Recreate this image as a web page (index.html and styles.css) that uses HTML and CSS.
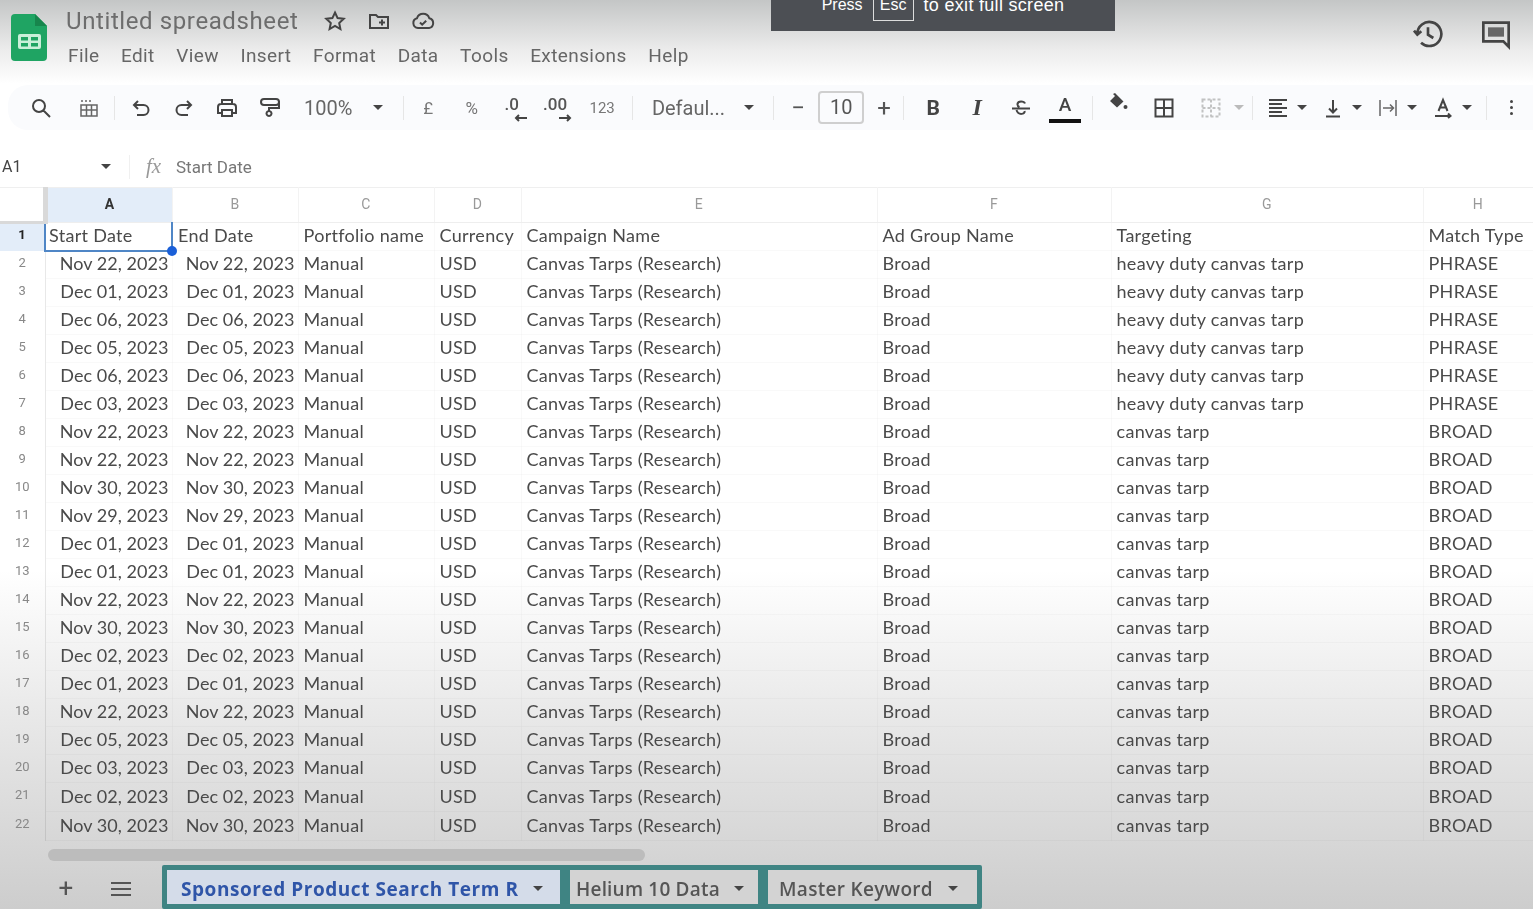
FILE: index.html
```html
<!DOCTYPE html>
<html lang="en">

<head>
    <meta charset="UTF-8">
    <meta name="viewport" content="width=device-width, initial-scale=1.0">
    <title>Untitled spreadsheet</title>
    <link rel="stylesheet" href="styles.css">
</head>

<body>
    <div class="app">

        <div class="fs-notice">
            <span>Press</span><span class="esc">Esc</span><span class="fs-rest">to exit full screen</span>
        </div>

        <header class="top">
            <svg class="logo" viewBox="0 0 36 47">
                <path d="M4 0H24L36 12V43a4 4 0 0 1-4 4H4a4 4 0 0 1-4-4V4a4 4 0 0 1 4-4z" fill="#1fa463" />
                <path d="M24 0V12H36z" fill="#17864d" />
                <rect x="7" y="20" width="23" height="15" rx="2" fill="#c9efd9" />
                <rect x="10" y="23" width="7" height="3.5" fill="#1fa463" />
                <rect x="20" y="23" width="7" height="3.5" fill="#1fa463" />
                <rect x="10" y="29" width="7" height="3.5" fill="#1fa463" />
                <rect x="20" y="29" width="7" height="3.5" fill="#1fa463" />
            </svg>
            <div class="doc">
                <div class="doc-title">
                    <span class="doc-name">Untitled spreadsheet</span>
                    <svg class="ico" viewBox="0 0 24 24"><path class="ln" d="M12 3.500l2.600 5.600 6.100.7-4.500 4.200 1.200 6L12 17l-5.400 3 1.200-6-4.500-4.200 6.100-.7z" /></svg>
                    <svg class="ico" viewBox="0 0 24 24"><path class="ln" d="M3 6h6l2 2h10v11H3z M12 13.500h6 M15 10.500v6" /></svg>
                    <svg class="ico" viewBox="0 0 24 24"><path class="ln" d="M7 19a5 5 0 0 1-1-9.800 6.500 6.500 0 0 1 12.300 0A5 5 0 0 1 18 19z M9 13.500l2.200 2.200 4-4" /></svg>
                </div>
                <nav class="menu">
                    <span>File</span><span>Edit</span><span>View</span><span>Insert</span><span>Format</span><span>Data</span><span>Tools</span><span>Extensions</span><span>Help</span>
                </nav>
            </div>
            <div class="top-right">
                <svg class="ico-lg" viewBox="0 0 24 24"><path class="ln" d="M4 12a9 9 0 1 1 2.800 6.500 M1.500 9.500L4 12.500l3-2.500 M12 7v5.500l4 2.500" /></svg>
                <svg class="ico-lg" viewBox="0 0 24 24"><path class="ln" d="M2.500 3.500h19v18l-4-4h-15z" /><path d="M6 7h12v7H6z" fill="#666" /></svg>
            </div>
        </header>

        <div class="toolbar">
            <div class="tb-group g-gap24">
                <svg class="ico" viewBox="0 0 24 24"><path class="ln" d="M10 4a6 6 0 1 0 0 12 6 6 0 0 0 0-12z M14.500 14.500L21 21" /></svg>
                <svg class="ico" viewBox="0 0 24 24"><path class="ln thin" d="M4 9h16v11H4z M4 14h16 M9.500 9v11 M14.500 9v11 M5 4v2 M9 4v2 M13 4v2" /></svg>
            </div>
            <i class="sep s1"></i>
            <div class="tb-group g-gap19">
                <svg class="ico" viewBox="0 0 24 24"><path class="ln" d="M9 5L5 9l4 4 M5 9h9.500a5 5 0 0 1 0 10H8" /></svg>
                <svg class="ico" viewBox="0 0 24 24"><path class="ln" d="M15 5l4 4-4 4 M19 9H9.500a5 5 0 0 0 0 10H16" /></svg>
                <svg class="ico" viewBox="0 0 24 24"><path class="ln" d="M7 8V4h10v4 M7 17H3v-6a3 3 0 0 1 3-3h12a3 3 0 0 1 3 3v6h-4 M7 14h10v6H7z" /></svg>
                <svg class="ico" viewBox="0 0 24 24"><path class="ln" d="M6 3h12a2 2 0 0 1 0 6H6a2 2 0 0 1 0-6z M20 6h1v6H11v3 M11 15a2.500 2.500 0 1 0 .01 0z" /></svg>
            </div>
            <div class="tb-group zoom">
                <span class="tb-text">100%</span><i class="caret"></i>
            </div>
            <i class="sep s2"></i>
            <div class="tb-group fmt">
                <span class="tb-sym">£</span>
                <span class="tb-sym">%</span>
                <span class="tb-dec">.0<svg viewBox="0 0 14 8"><path class="ln" d="M13 4H2 M5 1L2 4l3 3" /></svg></span>
                <span class="tb-dec">.00<svg viewBox="0 0 14 8"><path class="ln" d="M1 4h11 M9 1l3 3-3 3" /></svg></span>
                <span class="tb-sym small">123</span>
            </div>
            <i class="sep s3"></i>
            <div class="tb-group font">
                <span class="tb-text">Defaul...</span><i class="caret"></i>
            </div>
            <i class="sep s4"></i>
            <div class="tb-group size">
                <span class="tb-math">−</span>
                <span class="size-box">10</span>
                <span class="tb-math">+</span>
            </div>
            <i class="sep s5"></i>
            <div class="tb-group g-gap20">
                <span class="ico-txt bold">B</span>
                <span class="ico-txt ital">I</span>
                <svg class="ico" viewBox="0 0 24 24"><path class="ln" d="M16 7.500C15 5 9 4.500 8.500 8c-.2 1.500.8 2.500 2 3 M3 12.500h18 M15.500 15c1 3-6 5-8-1" /></svg>
                <span class="text-color">A</span>
            </div>
            <i class="sep s6"></i>
            <div class="tb-group cellfmt">
                <svg class="ico lift" viewBox="0 0 24 24"><path d="M10 2l8.500 8.500-6.500 6-7-6.500 5-5-2-2z" fill="#444" /><circle cx="20.500" cy="16" r="2" fill="#444" /></svg>
                <svg class="ico" viewBox="0 0 24 24"><path class="ln" d="M3.500 3.500h17v17h-17z M12 3.500v17 M3.500 12h17" /></svg>
                <svg class="ico faded" viewBox="0 0 24 24"><path class="ln dash" d="M3.500 3.500h17v17h-17z M12 3.500v17 M3.500 12h17" /></svg>
                <i class="caret pale"></i>
            </div>
            <i class="sep s7"></i>
            <div class="tb-group align">
                <span class="pair">
                    <svg class="ico" viewBox="0 0 24 24"><path class="ln" d="M3 4h18 M3 8h13 M3 12h18 M3 16h13 M3 20h18" /></svg><i class="caret"></i>
                </span>
                <span class="pair">
                    <svg class="ico" viewBox="0 0 24 24"><path class="ln" d="M12 4v12 M8 12.500l4 4 4-4 M5 20.500h14" /></svg><i class="caret"></i>
                </span>
                <span class="pair">
                    <svg class="ico" viewBox="0 0 24 24"><path class="ln thin" d="M4 4v16 M20 4v16 M7 12h10 M14 8.500l3.500 3.500-3.500 3.500" /></svg><i class="caret"></i>
                </span>
                <span class="pair">
                    <svg class="ico" viewBox="0 0 24 24"><path class="ln" d="M7.500 15L12 4l4.500 11 M9 11.500h6 M4 20h15 M17 17.500l2.500 2.500-2.500 2" /></svg><i class="caret"></i>
                </span>
            </div>
            <i class="sep s8"></i>
            <div class="more"><b></b><b></b><b></b></div>
        </div>

        <div class="formula">
            <span class="cell-ref">A1</span><i class="caret"></i>
            <i class="sep s9"></i>
            <span class="fx">fx</span>
            <span class="formula-val">Start Date</span>
        </div>

        <table class="sheet">
            <colgroup>
                <col class="c-head"><col class="c-a"><col class="c-b"><col class="c-c"><col class="c-d"><col class="c-e"><col class="c-f"><col class="c-g"><col class="c-h">
            </colgroup>
            <thead>
                <tr><th class="corner"></th><th class="on">A</th><th>B</th><th>C</th><th>D</th><th>E</th><th>F</th><th>G</th><th>H</th></tr>
            </thead>
            <tbody>
                <tr><th class="on">1</th><td class="selected">Start Date<i class="handle"></i></td><td>End Date</td><td>Portfolio name</td><td>Currency</td><td>Campaign Name</td><td>Ad Group Name</td><td>Targeting</td><td>Match Type</td></tr>
                <tr><th>2</th><td class="num">Nov 22, 2023</td><td class="num">Nov 22, 2023</td><td>Manual</td><td>USD</td><td>Canvas Tarps (Research)</td><td>Broad</td><td>heavy duty canvas tarp</td><td>PHRASE</td></tr>
                <tr><th>3</th><td class="num">Dec 01, 2023</td><td class="num">Dec 01, 2023</td><td>Manual</td><td>USD</td><td>Canvas Tarps (Research)</td><td>Broad</td><td>heavy duty canvas tarp</td><td>PHRASE</td></tr>
                <tr><th>4</th><td class="num">Dec 06, 2023</td><td class="num">Dec 06, 2023</td><td>Manual</td><td>USD</td><td>Canvas Tarps (Research)</td><td>Broad</td><td>heavy duty canvas tarp</td><td>PHRASE</td></tr>
                <tr><th>5</th><td class="num">Dec 05, 2023</td><td class="num">Dec 05, 2023</td><td>Manual</td><td>USD</td><td>Canvas Tarps (Research)</td><td>Broad</td><td>heavy duty canvas tarp</td><td>PHRASE</td></tr>
                <tr><th>6</th><td class="num">Dec 06, 2023</td><td class="num">Dec 06, 2023</td><td>Manual</td><td>USD</td><td>Canvas Tarps (Research)</td><td>Broad</td><td>heavy duty canvas tarp</td><td>PHRASE</td></tr>
                <tr><th>7</th><td class="num">Dec 03, 2023</td><td class="num">Dec 03, 2023</td><td>Manual</td><td>USD</td><td>Canvas Tarps (Research)</td><td>Broad</td><td>heavy duty canvas tarp</td><td>PHRASE</td></tr>
                <tr><th>8</th><td class="num">Nov 22, 2023</td><td class="num">Nov 22, 2023</td><td>Manual</td><td>USD</td><td>Canvas Tarps (Research)</td><td>Broad</td><td>canvas tarp</td><td>BROAD</td></tr>
                <tr><th>9</th><td class="num">Nov 22, 2023</td><td class="num">Nov 22, 2023</td><td>Manual</td><td>USD</td><td>Canvas Tarps (Research)</td><td>Broad</td><td>canvas tarp</td><td>BROAD</td></tr>
                <tr><th>10</th><td class="num">Nov 30, 2023</td><td class="num">Nov 30, 2023</td><td>Manual</td><td>USD</td><td>Canvas Tarps (Research)</td><td>Broad</td><td>canvas tarp</td><td>BROAD</td></tr>
                <tr><th>11</th><td class="num">Nov 29, 2023</td><td class="num">Nov 29, 2023</td><td>Manual</td><td>USD</td><td>Canvas Tarps (Research)</td><td>Broad</td><td>canvas tarp</td><td>BROAD</td></tr>
                <tr><th>12</th><td class="num">Dec 01, 2023</td><td class="num">Dec 01, 2023</td><td>Manual</td><td>USD</td><td>Canvas Tarps (Research)</td><td>Broad</td><td>canvas tarp</td><td>BROAD</td></tr>
                <tr><th>13</th><td class="num">Dec 01, 2023</td><td class="num">Dec 01, 2023</td><td>Manual</td><td>USD</td><td>Canvas Tarps (Research)</td><td>Broad</td><td>canvas tarp</td><td>BROAD</td></tr>
                <tr><th>14</th><td class="num">Nov 22, 2023</td><td class="num">Nov 22, 2023</td><td>Manual</td><td>USD</td><td>Canvas Tarps (Research)</td><td>Broad</td><td>canvas tarp</td><td>BROAD</td></tr>
                <tr><th>15</th><td class="num">Nov 30, 2023</td><td class="num">Nov 30, 2023</td><td>Manual</td><td>USD</td><td>Canvas Tarps (Research)</td><td>Broad</td><td>canvas tarp</td><td>BROAD</td></tr>
                <tr><th>16</th><td class="num">Dec 02, 2023</td><td class="num">Dec 02, 2023</td><td>Manual</td><td>USD</td><td>Canvas Tarps (Research)</td><td>Broad</td><td>canvas tarp</td><td>BROAD</td></tr>
                <tr><th>17</th><td class="num">Dec 01, 2023</td><td class="num">Dec 01, 2023</td><td>Manual</td><td>USD</td><td>Canvas Tarps (Research)</td><td>Broad</td><td>canvas tarp</td><td>BROAD</td></tr>
                <tr><th>18</th><td class="num">Nov 22, 2023</td><td class="num">Nov 22, 2023</td><td>Manual</td><td>USD</td><td>Canvas Tarps (Research)</td><td>Broad</td><td>canvas tarp</td><td>BROAD</td></tr>
                <tr><th>19</th><td class="num">Dec 05, 2023</td><td class="num">Dec 05, 2023</td><td>Manual</td><td>USD</td><td>Canvas Tarps (Research)</td><td>Broad</td><td>canvas tarp</td><td>BROAD</td></tr>
                <tr><th>20</th><td class="num">Dec 03, 2023</td><td class="num">Dec 03, 2023</td><td>Manual</td><td>USD</td><td>Canvas Tarps (Research)</td><td>Broad</td><td>canvas tarp</td><td>BROAD</td></tr>
                <tr class="tall"><th>21</th><td class="num">Dec 02, 2023</td><td class="num">Dec 02, 2023</td><td>Manual</td><td>USD</td><td>Canvas Tarps (Research)</td><td>Broad</td><td>canvas tarp</td><td>BROAD</td></tr>
                <tr class="tall"><th>22</th><td class="num">Nov 30, 2023</td><td class="num">Nov 30, 2023</td><td>Manual</td><td>USD</td><td>Canvas Tarps (Research)</td><td>Broad</td><td>canvas tarp</td><td>BROAD</td></tr>
            </tbody>
        </table>

        <div class="scroll-strip"><div class="scroll-thumb"></div></div>

        <div class="tabbar">
            <span class="tab-add">+</span>
            <div class="tab-list"><b></b><b></b><b></b></div>
            <div class="tabs">
                <div class="tab active"><span>Sponsored Product Search Term R</span><i class="caret"></i></div>
                <div class="tab t2"><span>Helium 10 Data</span><i class="caret"></i></div>
                <div class="tab t3"><span>Master Keyword</span><i class="caret"></i></div>
            </div>
        </div>

    </div>
</body>

</html>
```

FILE: styles.css
```css
* {
    box-sizing: border-box;
}

html,
body {
    margin: 0;
    padding: 0;
    background: #fff;
}

body {
    font-family: Roboto, "Liberation Sans", sans-serif;
    color: #444;
    overflow: hidden;
}

.app {
    position: relative;
    width: 1533px;
    height: 909px;
    overflow: hidden;
    display: flex;
    flex-direction: column;
    background: linear-gradient(to bottom, #c4c6c6 0, #ececec 50px, #fff 84px, #fff 570px, #e8e8e8 720px, #cdcdcd 100%);
}

/* video blur from the recording */
.top,
.toolbar,
.formula,
.sheet,
.tabbar {
    filter: blur(0.6px);
}

.fs-notice {
    position: absolute;
    top: 0;
    left: 771px;
    width: 344px;
    height: 31px;
    background: #4c4f54;
    color: #fff;
    font-family: "Liberation Sans", sans-serif;
    font-size: 16px;
    display: flex;
    justify-content: center;
    gap: 10px;
    line-height: 10px;
    overflow: hidden;
    z-index: 5;
}

.fs-rest {
    font-size: 18px;
    letter-spacing: 0.3px;
}

.esc {
    display: block;
    width: 41px;
    height: 21px;
    margin-top: 0;
    border: 1px solid #ddd;
    border-top: none;
    text-align: center;
}

/* header */
.top {
    height: 85px;
    display: flex;
    align-items: flex-start;
    padding-left: 11px;
}

.logo {
    width: 36px;
    height: 47px;
    margin-top: 14px;
}

.doc {
    margin-left: 19px;
}

.doc-title {
    display: flex;
    align-items: center;
    gap: 20px;
    height: 42px;
}

.doc-name {
    font-size: 24px;
    letter-spacing: 0.6px;
    color: #6d6d6d;
    margin-right: 5px;
}

.menu {
    display: flex;
    gap: 21.5px;
    margin-top: 2px;
    margin-left: 2px;
    font-size: 19px;
    color: #666;
    letter-spacing: 0.4px;
}

.top-right {
    margin-left: auto;
    display: flex;
    gap: 36px;
    padding: 18px 21px 0 0;
}

.ico {
    width: 24px;
    height: 24px;
    flex: none;
}

.ico.lift {
    margin-top: -9px;
}

.ico-lg {
    width: 32px;
    height: 32px;
}

.ln {
    fill: none;
    stroke: #444;
    stroke-width: 2;
}

.ln.thin {
    stroke-width: 1.5;
    stroke: #666;
}

.ln.dash {
    stroke-dasharray: 3 2;
    stroke: #aaa;
}

.faded {
    opacity: 0.7;
}

/* toolbar */
.toolbar {
    height: 45px;
    margin: 0 0 0 8px;
    padding-left: 21px;
    display: flex;
    align-items: center;
    background: #fafbfd;
    border-radius: 20px 0 0 20px;
}

.tb-group {
    display: flex;
    align-items: center;
}

.g-gap24 {
    gap: 24px;
}

.g-gap19 {
    gap: 19px;
}

.g-gap20 {
    gap: 20px;
}

.sep {
    display: block;
    width: 1px;
    height: 24px;
    background: #e6e6e6;
    flex: none;
}

.s1 {
    margin: 0 14px 0 13px;
}

.s2 {
    margin: 0 2px 0 20px;
}

.s3 {
    margin: 0 19px 0 8px;
}

.s4 {
    margin: 0 16px 0 19px;
}

.s5 {
    margin: 0 17px 0 11px;
}

.s6 {
    margin: 0 12px 0 11px;
}

.s7 {
    margin: 0 13px 0 8px;
}

.s8 {
    margin: 0 23px 0 14px;
}

.caret {
    display: block;
    width: 0;
    height: 0;
    flex: none;
    border-left: 5px solid transparent;
    border-right: 5px solid transparent;
    border-top: 5px solid #444;
}

.caret.pale {
    border-top-color: #bbb;
    margin-left: 12px;
}

.tb-text {
    font-size: 20px;
    color: #666;
}

.zoom {
    margin-left: 22px;
    gap: 21px;
}

.fmt {
    gap: 0;
}

.tb-sym {
    width: 43.5px;
    text-align: center;
    font-size: 17px;
    color: #777;
}

.tb-sym.small {
    font-size: 15px;
}

.tb-dec {
    width: 43.5px;
    padding-right: 7px;
    text-align: center;
    position: relative;
    font-size: 17px;
    font-weight: 500;
    color: #555;
    height: 28px;
    line-height: 20px;
}

.tb-dec svg {
    position: absolute;
    left: 21px;
    top: 20px;
    width: 14px;
    height: 8px;
}

.font {
    gap: 19px;
}

.size {
    gap: 12px;
}

.tb-math {
    width: 16px;
    text-align: center;
    font-size: 24px;
    color: #555;
}

.size-box {
    width: 46px;
    height: 33px;
    border: 2px solid #cfcfcf;
    border-radius: 4px;
    text-align: center;
    line-height: 29px;
    font-size: 20px;
    color: #555;
}

.ico-txt {
    width: 24px;
    text-align: center;
    font-size: 21px;
    color: #444;
}

.bold {
    font-weight: 700;
}

.ital {
    font-family: "Liberation Serif", serif;
    font-style: italic;
    font-weight: 700;
    font-size: 24px;
}

.text-color {
    width: 32px;
    height: 30px;
    margin-left: -4px;
    text-align: center;
    font-size: 19px;
    font-weight: 500;
    line-height: 23px;
    border-bottom: 4px solid #111;
}

.cellfmt {
    gap: 23px;
}

.cellfmt .caret.pale {
    margin-left: -12px;
}

.align {
    gap: 14px;
}

.pair {
    display: flex;
    align-items: center;
    gap: 7px;
}

.more {
    display: flex;
    flex-direction: column;
    gap: 3px;
}

.more b,
.tab-list b {
    display: block;
    background: #444;
}

.more b {
    width: 3px;
    height: 3px;
    border-radius: 50%;
}

/* formula bar */
.formula {
    height: 57px;
    padding: 16px 0 0 2px;
    display: flex;
    align-items: center;
}

.cell-ref {
    width: 99px;
    font-size: 16px;
    color: #444;
}

.s9 {
    margin: 0 26px 0 18px;
    background: #f0f0f0;
}

.fx {
    font-family: "Liberation Serif", serif;
    font-style: italic;
    font-size: 21px;
    color: #999;
    width: 30px;
    margin-left: -10px;
}

.formula-val {
    font-size: 17px;
    color: #777;
}

/* grid */
.sheet {
    width: 1533px;
    table-layout: fixed;
    border-collapse: collapse;
    font-family: Lato, "Liberation Sans", sans-serif;
    font-size: 18px;
    letter-spacing: 0.3px;
    color: #4a4a4a;
}

.c-head {
    width: 45px;
}

.c-a {
    width: 127px;
}

.c-b {
    width: 126px;
}

.c-c {
    width: 136px;
}

.c-d {
    width: 87px;
}

.c-e {
    width: 356px;
}

.c-f {
    width: 234px;
}

.c-g {
    width: 312px;
}

.c-h {
    width: 110px;
}

.sheet thead th {
    height: 35px;
    padding-bottom: 4px;
    font-family: Roboto, sans-serif;
    font-size: 14px;
    font-weight: 400;
    color: #999;
    border-right: 1px solid #f3f3f3;
    border-bottom: 1px solid #eee;
    border-top: 1px solid #efefef;
}

.sheet thead th.on {
    background: #e3edf9;
    color: #333;
    font-weight: 700;
}

.sheet thead th.corner {
    border-right: 5px solid #d9d9d9;
    border-bottom: 3px solid #d9d9d9;
}

.sheet tbody th {
    font-family: Roboto, sans-serif;
    font-size: 13px;
    font-weight: 400;
    letter-spacing: 0;
    color: #888;
    border-right: 1px solid rgba(0, 0, 0, 0.09);
    padding-bottom: 6px;
}

.sheet tbody th.on {
    background: #e3edf9;
    color: #222;
    font-weight: 700;
}

.sheet td {
    height: 28px;
    padding: 0 4px 3px 5px;
    white-space: nowrap;
    overflow: hidden;
    border-right: 1px solid rgba(0, 0, 0, 0.025);
    border-bottom: 1px solid rgba(0, 0, 0, 0.025);
}

.sheet .tall td {
    height: 29px;
}

.sheet td.num {
    text-align: right;
    padding-right: 3px;
    letter-spacing: 0.05px;
}

.sheet td.selected {
    position: relative;
    overflow: visible;
    padding-left: 3px;
    border: 2px solid #4f86c6;
    border-top: none;
}

.handle {
    position: absolute;
    right: -6px;
    bottom: -6px;
    width: 10px;
    height: 10px;
    border-radius: 50%;
    background: #1a5fd8;
}

.scroll-strip {
    height: 24px;
    padding: 8px 0 0 48px;
}

.scroll-thumb {
    width: 597px;
    height: 12px;
    border-radius: 6px;
    background: #bcbcbc;
}

/* sheet tabs */
.tabbar {
    flex: 1;
    display: flex;
    align-items: flex-start;
    padding-left: 58px;
}

.tab-add {
    width: 16px;
    margin-top: 9px;
    text-align: center;
    font-size: 26px;
    line-height: 28px;
    color: #555;
}

.tab-list {
    display: flex;
    flex-direction: column;
    gap: 4px;
    width: 20px;
    margin: 17px 0 0 37px;
}

.tab-list b {
    height: 2px;
    background: #555;
}

.tabs {
    display: flex;
    margin-left: 31px;
    height: 44px;
    border: 5px solid #3f8483;
    border-radius: 2px;
}

.tab {
    display: flex;
    align-items: center;
    gap: 14px;
    height: 100%;
    padding: 3px 0 0 14px;
    background: #d3d3d3;
    font-family: "Open Sans", sans-serif;
    font-size: 19px;
    font-weight: 600;
    letter-spacing: 0.3px;
    color: #555;
    border-left: 10px solid #3f8483;
}

.tab.active {
    width: 393px;
    background: #d4dce9;
    color: #2f55a8;
    border-left: none;
    letter-spacing: 0.55px;
    font-weight: 700;
}

.t2 {
    width: 198px;
    padding-left: 6px;
    letter-spacing: 0.2px;
}

.t3 {
    width: 219px;
    padding-left: 11px;
    gap: 15px;
}
```
